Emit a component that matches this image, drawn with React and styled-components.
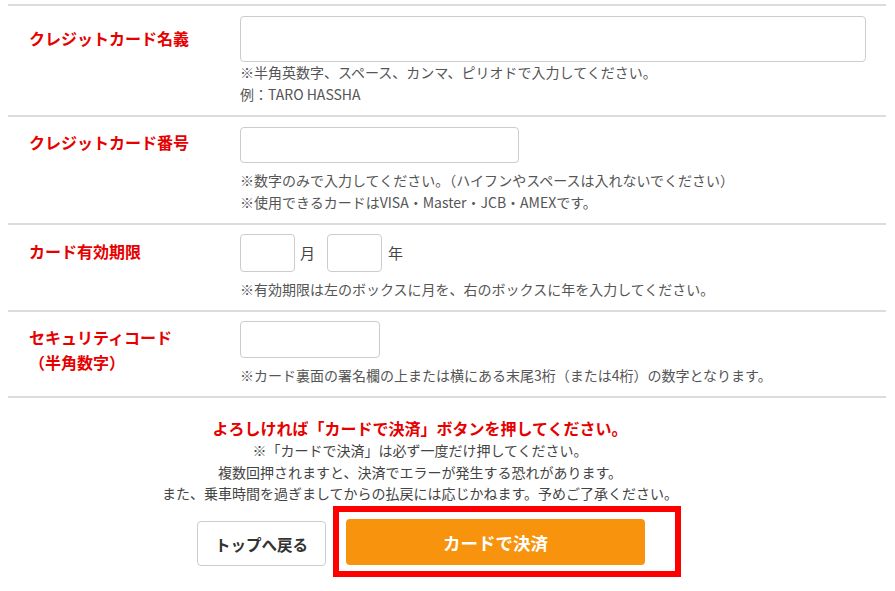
import React from "react";
import styled, { createGlobalStyle } from "styled-components";

const Global = createGlobalStyle`
  html, body { margin: 0; padding: 0; background: #fff; }
  body {
    font-family: "Noto Sans CJK JP", "Noto Sans", sans-serif;
    color: #444;
  }
  * { box-sizing: border-box; }
`;

const Page = styled.div`
  width: 895px;
  padding: 4px 9px 0 8px;
`;

const Form = styled.div`
  border-top: 2px solid #dcdcdc;
`;

const Row = styled.div`
  display: flex;
  align-items: flex-start;
  padding: ${(p) => p.$top}px 0 10px;
  border-bottom: 2px solid #dcdcdc;
`;

const LabelCell = styled.div`
  width: 232px;
  flex: none;
  padding-left: 21px;
  padding-top: ${(p) => p.$offset}px;
  font-size: 16px;
  line-height: 25px;
  font-weight: 700;
  color: #e60000;
`;

const FieldCell = styled.div`
  flex: 1;
  display: flex;
  flex-direction: column;
  align-items: flex-start;
`;

const TextInput = styled.input`
  display: block;
  width: ${(p) => p.$w}px;
  height: ${(p) => p.$h}px;
  border: 1px solid #cccccc;
  border-radius: 4px;
  background: #fff;
  padding: 0 8px;
  font: inherit;
  outline: none;
`;

const InlineFields = styled.div`
  display: flex;
  align-items: center;
`;

const Unit = styled.span`
  font-size: 15px;
  line-height: 20px;
  color: #444;
  margin: 0 ${(p) => p.$after}px 0 ${(p) => p.$before}px;
`;

const Notes = styled.div`
  margin-top: ${(p) => p.$gap}px;
`;

const Note = styled.div`
  font-size: 14px;
  line-height: 21.5px;
  color: #555;
  white-space: nowrap;
`;

const Confirm = styled.div`
  padding-right: 54px;
  margin-top: 18px;
  text-align: center;
`;

const ConfirmLead = styled.div`
  font-size: 16px;
  line-height: 24px;
  font-weight: 700;
  color: #e60000;
`;

const ConfirmNote = styled.div`
  font-size: 14px;
  line-height: 21.5px;
  color: #444;
`;

const Actions = styled.div`
  display: flex;
  justify-content: center;
  align-items: center;
  gap: 7px;
  padding-right: 16px;
  margin-top: 1.5px;
`;

const BackButton = styled.button`
  width: 129px;
  height: 45px;
  margin-top: 4px;
  border: 1px solid #cccccc;
  border-radius: 4px;
  background: #fff;
  font-family: inherit;
  font-size: 15.5px;
  font-weight: 700;
  color: #333;
  cursor: pointer;
`;

const Highlight = styled.div`
  border: 6px solid #ff0000;
  padding: 7px 30px 6px 7px;
`;

const PayButton = styled.button`
  display: block;
  width: 299px;
  height: 46px;
  border: none;
  border-radius: 4px;
  background: #f7930c;
  font-family: inherit;
  font-size: 17.5px;
  font-weight: 700;
  color: #fff;
  cursor: pointer;
`;

export default function App() {
  return (
    <>
      <Global />
      <Page>
        <Form>
          <Row $top={10}>
            <LabelCell $offset={9.5}>クレジットカード名義</LabelCell>
            <FieldCell>
              <TextInput $w={626} $h={46} />
              <Notes $gap={0}>
                <Note>※半角英数字、スペース、カンマ、ピリオドで入力してください。</Note>
                <Note>例：TARO HASSHA</Note>
              </Notes>
            </FieldCell>
          </Row>
          <Row $top={10}>
            <LabelCell $offset={2.5}>クレジットカード番号</LabelCell>
            <FieldCell>
              <TextInput $w={279} $h={36} />
              <Notes $gap={7}>
                <Note>※数字のみで入力してください。（ハイフンやスペースは入れないでください）</Note>
                <Note>※使用できるカードはVISA・Master・JCB・AMEXです。</Note>
              </Notes>
            </FieldCell>
          </Row>
          <Row $top={9}>
            <LabelCell $offset={5}>カード有効期限</LabelCell>
            <FieldCell>
              <InlineFields>
                <TextInput $w={55} $h={38} />
                <Unit $before={5} $after={12}>月</Unit>
                <TextInput $w={55} $h={38} />
                <Unit $before={6} $after={0}>年</Unit>
              </InlineFields>
              <Notes $gap={6.5}>
                <Note>※有効期限は左のボックスに月を、右のボックスに年を入力してください。</Note>
              </Notes>
            </FieldCell>
          </Row>
          <Row $top={9}>
            <LabelCell $offset={4}>
              セキュリティコード
              <br />
              （半角数字）
            </LabelCell>
            <FieldCell>
              <TextInput $w={140} $h={37} />
              <Notes $gap={6.5}>
                <Note>※カード裏面の署名欄の上または横にある末尾3桁（または4桁）の数字となります。</Note>
              </Notes>
            </FieldCell>
          </Row>
        </Form>
        <Confirm>
          <ConfirmLead>よろしければ「カードで決済」ボタンを押してください。</ConfirmLead>
          <ConfirmNote>※「カードで決済」は必ず一度だけ押してください。</ConfirmNote>
          <ConfirmNote>複数回押されますと、決済でエラーが発生する恐れがあります。</ConfirmNote>
          <ConfirmNote>また、乗車時間を過ぎましてからの払戻には応じかねます。予めご了承ください。</ConfirmNote>
        </Confirm>
        <Actions>
          <BackButton type="button">トップへ戻る</BackButton>
          <Highlight>
            <PayButton type="button">カードで決済</PayButton>
          </Highlight>
        </Actions>
      </Page>
    </>
  );
}
